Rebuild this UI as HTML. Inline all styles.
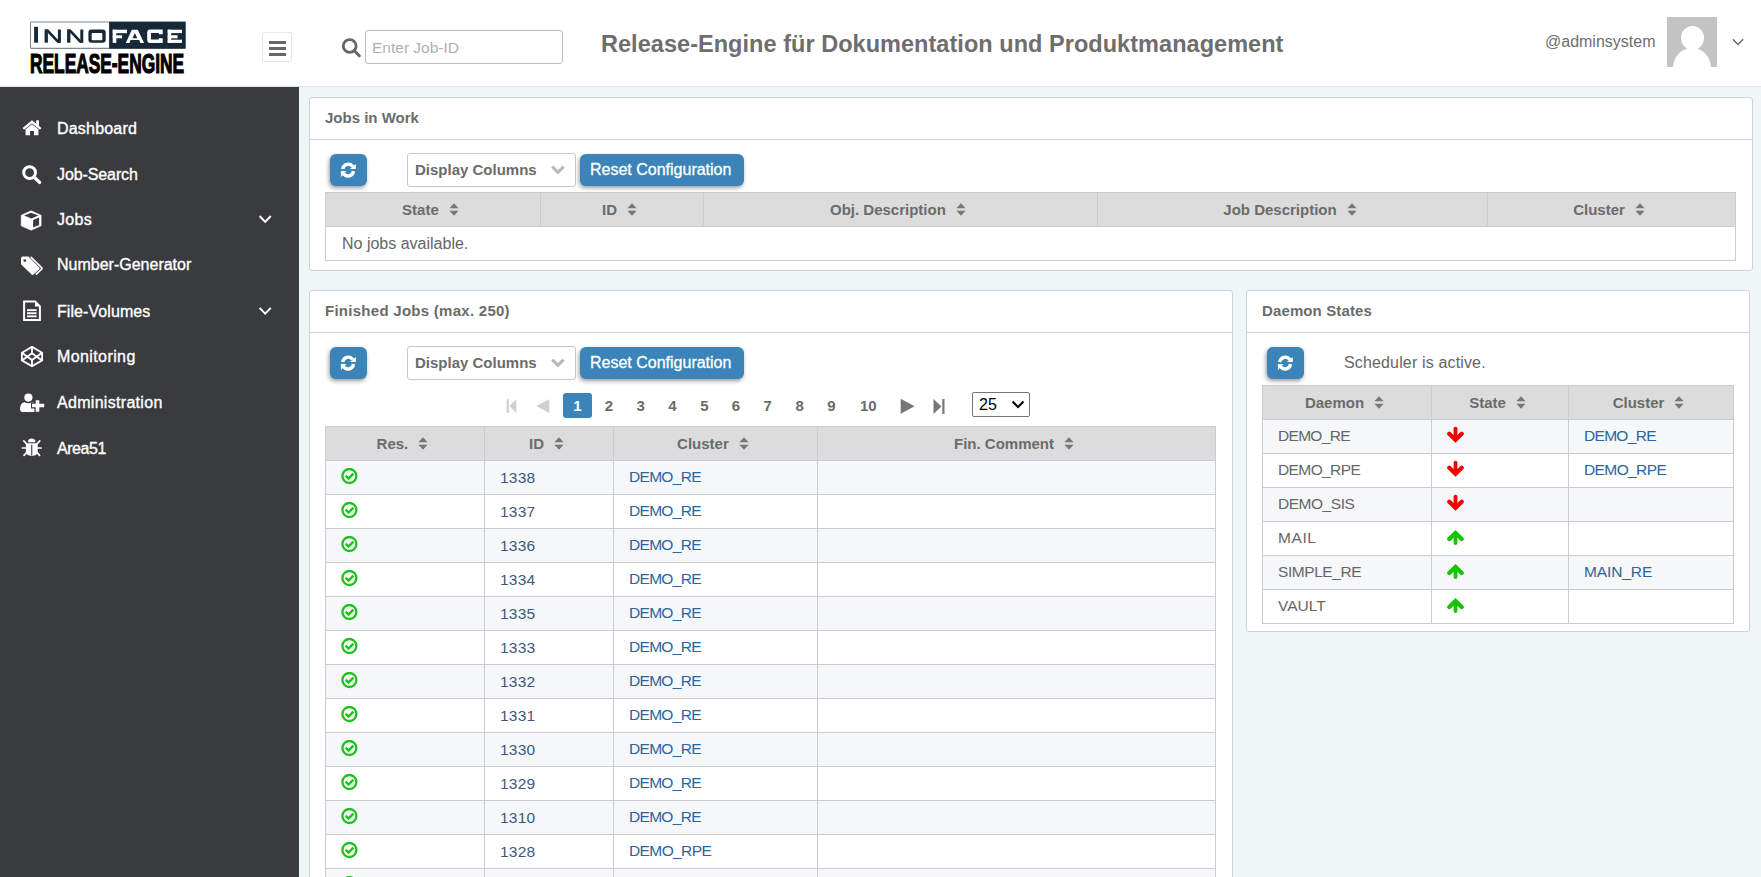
<!DOCTYPE html>
<html><head><meta charset="utf-8"><style>
*{box-sizing:border-box}
html,body{margin:0;padding:0}
body{width:1761px;height:877px;overflow:hidden;position:relative;background:#f0f5f8;font-family:"Liberation Sans",sans-serif;color:#666}
.abs{position:absolute}
#hdr{left:0;top:0;width:1761px;height:87px;background:#fff;border-bottom:1px solid #dfe4e8}
#side{left:0;top:87px;width:299px;height:790px;background:#3a3b3f}
.t{position:absolute;white-space:nowrap}
</style></head><body>
<div id="hdr" class="abs">
<svg class="abs" style="left:0;top:0" width="200" height="80" viewBox="0 0 200 80">
  <rect x="30.5" y="22" width="155" height="26.4" fill="#fff" stroke="#7f8a93" stroke-width="1.1" rx="0.8"/>
  <rect x="109.1" y="21.8" width="76.3" height="26.8" fill="#172838"/>
  <g fill="#172838">
   <rect x="34.1" y="26.8" width="3.9" height="15.9"/>
   <rect x="44.6" y="29.5" width="3.3" height="13.2"/><rect x="57.9" y="29.5" width="3" height="13.2"/>
   <polygon points="44.6,29.5 48.3,29.5 60.9,42.7 57.2,42.7"/>
   <rect x="67.1" y="29.5" width="3.3" height="13.2"/><rect x="80.3" y="29.5" width="3" height="13.2"/>
   <polygon points="67.1,29.5 70.8,29.5 83.3,42.7 79.6,42.7"/>
   <path fill-rule="evenodd" d="M91.4,29.5 H102.7 Q105.7,29.5 105.7,32.5 V39.7 Q105.7,42.7 102.7,42.7 H91.4 Q88.4,42.7 88.4,39.7 V32.5 Q88.4,29.5 91.4,29.5 Z M92.3,33.1 H101.7 Q102.3,33.1 102.3,33.7 V39.6 Q102.3,40.2 101.7,40.2 H92.3 Q91.7,40.2 91.7,39.6 V33.7 Q91.7,33.1 92.3,33.1 Z"/>
  </g>
  <g fill="#fff">
   <rect x="112.7" y="29.7" width="3.6" height="13.2"/><rect x="112.7" y="29.7" width="14.3" height="3.5"/><rect x="112.7" y="35.3" width="9.4" height="3"/>
   <path fill-rule="evenodd" d="M131.8,29.7 H137.8 L144.1,42.9 H140.4 L139.2,40.1 H130.6 L129.4,42.9 H125.8 Z M134.9,33 L137.3,38.2 H132.5 Z"/>
   <path fill-rule="evenodd" d="M150.2,29.5 H162.7 V34.3 H158.8 V33.1 H151 V39.4 H158.8 V38.3 H162.7 V42.9 H150.2 Q147.2,42.9 147.2,39.9 V32.5 Q147.2,29.5 150.2,29.5 Z"/>
   <rect x="167.7" y="29.7" width="3.5" height="13.2"/><rect x="167.7" y="29.7" width="14.3" height="3.4"/><rect x="167.7" y="35.2" width="9.8" height="3.1"/><rect x="167.7" y="39.7" width="14.3" height="3.2"/>
  </g>
 </svg>
 <div class="abs" style="left:30.2px;top:49px;height:28px;color:#000;font-weight:bold;font-size:28.5px;line-height:28px;white-space:nowrap;transform:scaleX(0.608);transform-origin:0 0;letter-spacing:0px;-webkit-text-stroke:1.2px #000">RELEASE-ENGINE</div>
 <div class="abs" style="left:262px;top:32px;width:30px;height:30px;border:1px solid #e6e6e6;border-radius:2px;background:#fff">
   <div class="abs" style="left:6px;top:8px;width:17px;height:3px;background:#666"></div>
   <div class="abs" style="left:6px;top:14px;width:17px;height:3px;background:#666"></div>
   <div class="abs" style="left:6px;top:20px;width:17px;height:3px;background:#666"></div>
 </div>
 <svg class="abs" style="left:341px;top:38px" width="20" height="20" viewBox="0 0 20 20"><circle cx="8.7" cy="8" r="6.4" fill="none" stroke="#666" stroke-width="2.8"/><line x1="13.3" y1="12.8" x2="18.3" y2="17.8" stroke="#666" stroke-width="3" stroke-linecap="round"/></svg>
 <div class="abs" style="left:365px;top:30px;width:198px;height:34px;border:1px solid #b9bec2;border-radius:3px;background:#fff"></div>
 <div class="abs" style="left:372px;top:38.5px;font-size:15.5px;line-height:18px;color:#b0b0b0;white-space:nowrap">Enter Job-ID</div>
 <div class="abs" style="left:601px;top:30px;font-size:23.5px;line-height:28px;font-weight:bold;color:#6e6e6e;white-space:nowrap;letter-spacing:0.04px">Release-Engine für Dokumentation und Produktmanagement</div>
 <div class="abs" style="left:1545px;top:33px;font-size:16px;line-height:18px;color:#6e6e6e;white-space:nowrap">@adminsystem</div>
 <div class="abs" style="left:1667px;top:17px;width:50px;height:50px;background:#c3c3c3;overflow:hidden">
   <div class="abs" style="left:14px;top:9px;width:23px;height:24px;border-radius:50%;background:#fff"></div>
   <div class="abs" style="left:6px;top:31px;width:38px;height:40px;border-radius:50%;background:#fff"></div>
 </div>
 <svg class="abs" style="left:1731px;top:37px" width="14" height="10" viewBox="0 0 14 10"><polyline points="1.8,2.3 7,7.5 12.2,2.3" fill="none" stroke="#666" stroke-width="1.4"/></svg>
</div>
<div id="side" class="abs"><svg class="abs" style="left:0;top:-87px" width="299" height="877" viewBox="0 0 299 877">
<g fill="#fff" stroke="none">
 <polyline points="23.3,128.8 32,121.8 40.7,128.8" fill="none" stroke="#fff" stroke-width="2.3"/>
 <rect x="36.2" y="120.3" width="2.8" height="5.5"/>
 <path d="M25.6,129.2 L32,124.2 L38.4,129.2 V135.2 H34 V131 H30 V135.2 H25.6 Z"/>
 <circle cx="29.6" cy="172.6" r="5.9" fill="none" stroke="#fff" stroke-width="3"/>
 <line x1="34.2" y1="177.2" x2="39.6" y2="182.4" stroke="#fff" stroke-width="3.4" stroke-linecap="round"/>
 <path d="M31.1,210.8 L41.1,215.3 L41.1,225.8 L31.1,230.2 L21.2,225.8 L21.2,215.3 Z" stroke="#fff" stroke-width="0.6" stroke-linejoin="round"/>
 <path d="M31.1,212.7 L38.3,215.6 L31.4,218.6 L24.1,215.6 Z" fill="#3a3b3f"/>
 <path d="M33.1,220 L39.1,217.4 L39.1,224.9 L33.1,227.6 Z" fill="#3a3b3f"/>
 <path d="M30.6,256.8 L41.6,267.6 Q42.4,268.4 41.6,269.2 L35.8,274.6" fill="none" stroke="#fff" stroke-width="1.7"/>
 <path d="M21,258.5 Q21,256.6 22.9,256.6 L28.4,256.6 L39.2,267.4 Q40.1,268.3 39.2,269.2 L33.4,274.6 Q32.5,275.4 31.6,274.6 L21,264.3 Z"/>
 <circle cx="24.8" cy="260.6" r="1.4" fill="#3a3b3f"/>
 <path d="M24.1,301.6 H35.2 L39.9,306.3 V319.9 H24.1 Z" fill="none" stroke="#fff" stroke-width="2"/>
 <path d="M35,301.6 L40,306.6 L35,306.6 Z"/>
 <rect x="27" y="309.2" width="9.6" height="1.9"/><rect x="27" y="312.3" width="9.6" height="1.9"/><rect x="27" y="315.4" width="9.6" height="1.9"/>
 <g fill="none" stroke="#fff" stroke-width="1.9" stroke-linejoin="round">
  <path d="M32,346.9 L42.1,352.8 L42.1,360.4 L32,366.3 L21.9,360.4 L21.9,352.8 Z"/>
  <path d="M32,346.9 V353.2 L21.9,360.4 M32,353.2 L42.1,360.4 M32,366.3 V360 L21.9,352.8 M32,360 L42.1,352.8"/>
 </g>
 <circle cx="28.4" cy="397.6" r="4.1"/>
 <path d="M20.1,409.5 Q20.1,402.6 24.6,402.2 Q28.4,404.3 32.2,402.2 Q36.2,402.6 36.8,409.5 Q36.8,412 34.5,412 H22.4 Q20.1,412 20.1,409.5 Z"/>
 <path d="M37.5,399 V412.5 M31,405.5 H45" stroke="#3a3b3f" stroke-width="6.2"/>
 <path d="M37.5,400.2 V411.8 M32,405.5 H44.2" stroke="#fff" stroke-width="3.6"/>
 <path d="M27.9,442.2 A3.8,3.8 0 0 1 35.5,442.2 Z"/>
 <path d="M25.9,443.2 H37.7 V451.5 Q37.7,455.8 31.8,455.9 Q25.9,455.8 25.9,451.5 Z"/>
 <rect x="31.2" y="444.6" width="1.1" height="11" fill="#3a3b3f"/>
 <path d="M23.8,440.9 L26.6,443.9 M39.8,440.9 L37,443.9 M22.4,448 H26.2 M37.4,448 H41.1 M24,455.4 L26.8,452.4 M39.6,455.4 L36.8,452.4" stroke="#fff" stroke-width="1.7" stroke-linecap="round"/>
 <polyline points="259.6,216 265.2,221.8 270.8,216" fill="none" stroke="#fff" stroke-width="1.9"/>
 <polyline points="259.6,307.8 265.2,313.6 270.8,307.8" fill="none" stroke="#fff" stroke-width="1.9"/>
</g></svg><div class="abs" style="left:57px;top:32.5px;font-size:16px;line-height:18px;color:#fff;white-space:nowrap;-webkit-text-stroke:0.35px #fff;letter-spacing:0.2px">Dashboard</div><div class="abs" style="left:57px;top:78.5px;font-size:16px;line-height:18px;color:#fff;white-space:nowrap;-webkit-text-stroke:0.35px #fff;letter-spacing:-0.1px">Job-Search</div><div class="abs" style="left:57px;top:123.8px;font-size:16px;line-height:18px;color:#fff;white-space:nowrap;-webkit-text-stroke:0.35px #fff;letter-spacing:0.3px">Jobs</div><div class="abs" style="left:57px;top:169.3px;font-size:16px;line-height:18px;color:#fff;white-space:nowrap;-webkit-text-stroke:0.35px #fff;letter-spacing:0px">Number-Generator</div><div class="abs" style="left:57px;top:215.5px;font-size:16px;line-height:18px;color:#fff;white-space:nowrap;-webkit-text-stroke:0.35px #fff;letter-spacing:0.07px">File-Volumes</div><div class="abs" style="left:57px;top:261.0px;font-size:16px;line-height:18px;color:#fff;white-space:nowrap;-webkit-text-stroke:0.35px #fff;letter-spacing:0.4px">Monitoring</div><div class="abs" style="left:57px;top:306.5px;font-size:16px;line-height:18px;color:#fff;white-space:nowrap;-webkit-text-stroke:0.35px #fff;letter-spacing:0.3px">Administration</div><div class="abs" style="left:57px;top:352.5px;font-size:16px;line-height:18px;color:#fff;white-space:nowrap;-webkit-text-stroke:0.35px #fff;letter-spacing:-0.45px">Area51</div></div>

<div id="main">
<div class="abs" style="left:309px;top:97px;width:1444px;height:174px;background:#fff;border:1px solid #cfd4d8;border-radius:3px"></div>
<div class="abs" style="left:309px;top:139px;width:1444px;height:1px;background:#cfd4d8"></div>
<div class="t" style="left:325px;top:109.2px;font-size:15px;line-height:18px;font-weight:bold;color:#6b6b6b;letter-spacing:0px">Jobs in Work</div>
<div class="abs" style="left:330px;top:154px;width:37px;height:32px;background:#3a84b9;border-radius:6px;box-shadow:-1px 2px 4px rgba(0,0,0,.4)"><svg class="abs" style="left:10px;top:8px;overflow:visible" width="17" height="17" viewBox="-1 -1 17 17"><path d="M1.7,6.1 A5.5,5.5 0 0 1 11.8,3.7" fill="none" stroke="#fff" stroke-width="3.3"/><path d="M14.8,0.9 V6.1 H8.9 Z" fill="#fff"/><path d="M12.5,8.0 A5.5,5.5 0 0 1 2.4,10.4" fill="none" stroke="#fff" stroke-width="3.3"/><path d="M-0.1,13.9 V8.0 H5.6 Z" fill="#fff"/></svg></div>
<div class="abs" style="left:407px;top:153px;width:169px;height:34px;border:1px solid #c4c9cd;border-radius:3px;background:#fff"></div>
<div class="t" style="left:415px;top:160.8px;font-size:15px;line-height:18px;font-weight:bold;color:#6b6b6b">Display Columns</div>
<svg class="abs" style="left:550px;top:164px" width="16" height="12" viewBox="0 0 16 12"><polyline points="2.2,2.6 7.9,8.3 13.6,2.6" fill="none" stroke="#b8b8b8" stroke-width="3"/></svg>
<div class="abs" style="left:580px;top:154px;width:164px;height:32px;background:#3a84b9;border-radius:6px;box-shadow:-1px 2px 4px rgba(0,0,0,.4)"></div>
<div class="t" style="left:590px;top:161.0px;font-size:16px;line-height:18px;color:#fff;-webkit-text-stroke:0.3px #fff">Reset Configuration</div>
<div class="abs" style="left:325px;top:192px;width:1410px;height:34px;background:#dcdcdc"></div>
<div class="abs" style="left:325px;top:192px;width:1411px;height:1px;background:#c9cdd1"></div>
<div class="abs" style="left:325px;top:226px;width:1411px;height:1px;background:#c9cdd1"></div>
<div class="abs" style="left:325px;top:260px;width:1411px;height:1px;background:#c9cdd1"></div>
<div class="abs" style="left:325px;top:192px;width:1px;height:68px;background:#c9cdd1"></div>
<div class="abs" style="left:1735px;top:192px;width:1px;height:68px;background:#c9cdd1"></div>
<div class="abs" style="left:540px;top:192px;width:1px;height:34px;background:#c9cdd1"></div>
<div class="abs" style="left:703px;top:192px;width:1px;height:34px;background:#c9cdd1"></div>
<div class="abs" style="left:1097px;top:192px;width:1px;height:34px;background:#c9cdd1"></div>
<div class="abs" style="left:1487px;top:192px;width:1px;height:34px;background:#c9cdd1"></div>
<div class="t" style="left:402.1px;top:201.0px;font-size:15px;line-height:18px;font-weight:bold;color:#6b6b6b">State</div>
<svg class="abs" style="left:449px;top:202.5px" width="10" height="13" viewBox="0 0 10 13"><path d="M5,0.3 L9.6,5.2 H0.4 Z M5,12.7 L9.6,7.8 H0.4 Z" fill="#777"/></svg>
<div class="t" style="left:602.0px;top:201.0px;font-size:15px;line-height:18px;font-weight:bold;color:#6b6b6b">ID</div>
<svg class="abs" style="left:627px;top:202.5px" width="10" height="13" viewBox="0 0 10 13"><path d="M5,0.3 L9.6,5.2 H0.4 Z M5,12.7 L9.6,7.8 H0.4 Z" fill="#777"/></svg>
<div class="t" style="left:830.0px;top:201.0px;font-size:15px;line-height:18px;font-weight:bold;color:#6b6b6b">Obj. Description</div>
<svg class="abs" style="left:956px;top:202.5px" width="10" height="13" viewBox="0 0 10 13"><path d="M5,0.3 L9.6,5.2 H0.4 Z M5,12.7 L9.6,7.8 H0.4 Z" fill="#777"/></svg>
<div class="t" style="left:1223.3px;top:201.0px;font-size:15px;line-height:18px;font-weight:bold;color:#6b6b6b">Job Description</div>
<svg class="abs" style="left:1347px;top:202.5px" width="10" height="13" viewBox="0 0 10 13"><path d="M5,0.3 L9.6,5.2 H0.4 Z M5,12.7 L9.6,7.8 H0.4 Z" fill="#777"/></svg>
<div class="t" style="left:1573.2px;top:201.0px;font-size:15px;line-height:18px;font-weight:bold;color:#6b6b6b">Cluster</div>
<svg class="abs" style="left:1635px;top:202.5px" width="10" height="13" viewBox="0 0 10 13"><path d="M5,0.3 L9.6,5.2 H0.4 Z M5,12.7 L9.6,7.8 H0.4 Z" fill="#777"/></svg>
<div class="t" style="left:342px;top:234.5px;font-size:16px;line-height:18px;color:#666">No jobs available.</div>
<div class="abs" style="left:309px;top:290px;width:924px;height:610px;background:#fff;border:1px solid #cfd4d8;border-radius:3px"></div>
<div class="abs" style="left:309px;top:332px;width:924px;height:1px;background:#cfd4d8"></div>
<div class="t" style="left:325px;top:302.2px;font-size:15px;line-height:18px;font-weight:bold;color:#6b6b6b;letter-spacing:0.27px">Finished Jobs (max. 250)</div>
<div class="abs" style="left:330px;top:347px;width:37px;height:32px;background:#3a84b9;border-radius:6px;box-shadow:-1px 2px 4px rgba(0,0,0,.4)"><svg class="abs" style="left:10px;top:8px;overflow:visible" width="17" height="17" viewBox="-1 -1 17 17"><path d="M1.7,6.1 A5.5,5.5 0 0 1 11.8,3.7" fill="none" stroke="#fff" stroke-width="3.3"/><path d="M14.8,0.9 V6.1 H8.9 Z" fill="#fff"/><path d="M12.5,8.0 A5.5,5.5 0 0 1 2.4,10.4" fill="none" stroke="#fff" stroke-width="3.3"/><path d="M-0.1,13.9 V8.0 H5.6 Z" fill="#fff"/></svg></div>
<div class="abs" style="left:407px;top:346px;width:169px;height:34px;border:1px solid #c4c9cd;border-radius:3px;background:#fff"></div>
<div class="t" style="left:415px;top:353.8px;font-size:15px;line-height:18px;font-weight:bold;color:#6b6b6b">Display Columns</div>
<svg class="abs" style="left:550px;top:357px" width="16" height="12" viewBox="0 0 16 12"><polyline points="2.2,2.6 7.9,8.3 13.6,2.6" fill="none" stroke="#b8b8b8" stroke-width="3"/></svg>
<div class="abs" style="left:580px;top:347px;width:164px;height:32px;background:#3a84b9;border-radius:6px;box-shadow:-1px 2px 4px rgba(0,0,0,.4)"></div>
<div class="t" style="left:590px;top:354.0px;font-size:16px;line-height:18px;color:#fff;-webkit-text-stroke:0.3px #fff">Reset Configuration</div>
<svg class="abs" style="left:500px;top:390px" width="460" height="30" viewBox="500 390 460 30"><rect x="506.6" y="399.2" width="2.2" height="13.8" fill="#cfcfcf"/><path d="M516.3,399.2 V413 L509.5,406.1 Z" fill="#cfcfcf"/><path d="M549.3,399.2 V413 L536.2,406.1 Z" fill="#cfcfcf"/><path d="M900.7,398.8 V413.8 L914.6,406.3 Z" fill="#777"/><path d="M933.5,399 V414 L941.5,406.5 Z" fill="#777"/><rect x="942.3" y="399" width="2.2" height="15" fill="#777"/></svg>
<div class="abs" style="left:563px;top:393px;width:29px;height:25px;background:#3a84b9;border-radius:3px"></div>
<div class="t" style="left:573.3px;top:396.8px;font-size:15px;line-height:18px;font-weight:bold;color:#fff">1</div>
<div class="t" style="left:604.8px;top:396.8px;font-size:15px;line-height:18px;font-weight:bold;color:#6b6b6b">2</div>
<div class="t" style="left:636.6px;top:396.8px;font-size:15px;line-height:18px;font-weight:bold;color:#6b6b6b">3</div>
<div class="t" style="left:668.3px;top:396.8px;font-size:15px;line-height:18px;font-weight:bold;color:#6b6b6b">4</div>
<div class="t" style="left:700.3px;top:396.8px;font-size:15px;line-height:18px;font-weight:bold;color:#6b6b6b">5</div>
<div class="t" style="left:731.8px;top:396.8px;font-size:15px;line-height:18px;font-weight:bold;color:#6b6b6b">6</div>
<div class="t" style="left:763.6px;top:396.8px;font-size:15px;line-height:18px;font-weight:bold;color:#6b6b6b">7</div>
<div class="t" style="left:795.4px;top:396.8px;font-size:15px;line-height:18px;font-weight:bold;color:#6b6b6b">8</div>
<div class="t" style="left:827.2px;top:396.8px;font-size:15px;line-height:18px;font-weight:bold;color:#6b6b6b">9</div>
<div class="t" style="left:860.0px;top:396.8px;font-size:15px;line-height:18px;font-weight:bold;color:#6b6b6b">10</div>
<div class="abs" style="left:972px;top:392px;width:58px;height:25px;border:1px solid #767676;border-radius:2px;background:#fff"></div>
<div class="t" style="left:979px;top:395.8px;font-size:16px;line-height:18px;color:#000">25</div>
<svg class="abs" style="left:1011px;top:400px" width="14" height="9" viewBox="0 0 14 9"><polyline points="1.5,1.5 7,7 12.5,1.5" fill="none" stroke="#000" stroke-width="2"/></svg>
<div class="abs" style="left:325px;top:426px;width:890px;height:34px;background:#dcdcdc"></div>
<div class="abs" style="left:325px;top:460px;width:890px;height:34px;background:#f6f7f9"></div>
<div class="abs" style="left:325px;top:494px;width:890px;height:34px;background:#fff"></div>
<div class="abs" style="left:325px;top:528px;width:890px;height:34px;background:#f6f7f9"></div>
<div class="abs" style="left:325px;top:562px;width:890px;height:34px;background:#fff"></div>
<div class="abs" style="left:325px;top:596px;width:890px;height:34px;background:#f6f7f9"></div>
<div class="abs" style="left:325px;top:630px;width:890px;height:34px;background:#fff"></div>
<div class="abs" style="left:325px;top:664px;width:890px;height:34px;background:#f6f7f9"></div>
<div class="abs" style="left:325px;top:698px;width:890px;height:34px;background:#fff"></div>
<div class="abs" style="left:325px;top:732px;width:890px;height:34px;background:#f6f7f9"></div>
<div class="abs" style="left:325px;top:766px;width:890px;height:34px;background:#fff"></div>
<div class="abs" style="left:325px;top:800px;width:890px;height:34px;background:#f6f7f9"></div>
<div class="abs" style="left:325px;top:834px;width:890px;height:34px;background:#fff"></div>
<div class="abs" style="left:325px;top:868px;width:890px;height:34px;background:#f6f7f9"></div>
<div class="abs" style="left:325px;top:426px;width:891px;height:1px;background:#c9cdd1"></div>
<div class="abs" style="left:325px;top:460px;width:891px;height:1px;background:#c9cdd1"></div>
<div class="abs" style="left:325px;top:494px;width:891px;height:1px;background:#c9cdd1"></div>
<div class="abs" style="left:325px;top:528px;width:891px;height:1px;background:#c9cdd1"></div>
<div class="abs" style="left:325px;top:562px;width:891px;height:1px;background:#c9cdd1"></div>
<div class="abs" style="left:325px;top:596px;width:891px;height:1px;background:#c9cdd1"></div>
<div class="abs" style="left:325px;top:630px;width:891px;height:1px;background:#c9cdd1"></div>
<div class="abs" style="left:325px;top:664px;width:891px;height:1px;background:#c9cdd1"></div>
<div class="abs" style="left:325px;top:698px;width:891px;height:1px;background:#c9cdd1"></div>
<div class="abs" style="left:325px;top:732px;width:891px;height:1px;background:#c9cdd1"></div>
<div class="abs" style="left:325px;top:766px;width:891px;height:1px;background:#c9cdd1"></div>
<div class="abs" style="left:325px;top:800px;width:891px;height:1px;background:#c9cdd1"></div>
<div class="abs" style="left:325px;top:834px;width:891px;height:1px;background:#c9cdd1"></div>
<div class="abs" style="left:325px;top:868px;width:891px;height:1px;background:#c9cdd1"></div>
<div class="abs" style="left:325px;top:902px;width:891px;height:1px;background:#c9cdd1"></div>
<div class="abs" style="left:325px;top:426px;width:1px;height:476px;background:#c9cdd1"></div>
<div class="abs" style="left:484px;top:426px;width:1px;height:476px;background:#c9cdd1"></div>
<div class="abs" style="left:613px;top:426px;width:1px;height:476px;background:#c9cdd1"></div>
<div class="abs" style="left:817px;top:426px;width:1px;height:476px;background:#c9cdd1"></div>
<div class="abs" style="left:1215px;top:426px;width:1px;height:476px;background:#c9cdd1"></div>
<div class="t" style="left:376.6px;top:435.0px;font-size:15px;line-height:18px;font-weight:bold;color:#6b6b6b">Res.</div>
<svg class="abs" style="left:418px;top:436.5px" width="10" height="13" viewBox="0 0 10 13"><path d="M5,0.3 L9.6,5.2 H0.4 Z M5,12.7 L9.6,7.8 H0.4 Z" fill="#777"/></svg>
<div class="t" style="left:529.0px;top:435.0px;font-size:15px;line-height:18px;font-weight:bold;color:#6b6b6b">ID</div>
<svg class="abs" style="left:554px;top:436.5px" width="10" height="13" viewBox="0 0 10 13"><path d="M5,0.3 L9.6,5.2 H0.4 Z M5,12.7 L9.6,7.8 H0.4 Z" fill="#777"/></svg>
<div class="t" style="left:677.1px;top:435.0px;font-size:15px;line-height:18px;font-weight:bold;color:#6b6b6b">Cluster</div>
<svg class="abs" style="left:739px;top:436.5px" width="10" height="13" viewBox="0 0 10 13"><path d="M5,0.3 L9.6,5.2 H0.4 Z M5,12.7 L9.6,7.8 H0.4 Z" fill="#777"/></svg>
<div class="t" style="left:954.0px;top:435.0px;font-size:15px;line-height:18px;font-weight:bold;color:#6b6b6b">Fin. Comment</div>
<svg class="abs" style="left:1064px;top:436.5px" width="10" height="13" viewBox="0 0 10 13"><path d="M5,0.3 L9.6,5.2 H0.4 Z M5,12.7 L9.6,7.8 H0.4 Z" fill="#777"/></svg>
<svg class="abs" style="left:341px;top:468px" width="17" height="17" viewBox="0 0 17 17"><circle cx="8.4" cy="8" r="7" fill="none" stroke="#1cc21c" stroke-width="2.3"/><polyline points="4.6,7.6 7.6,10.6 12.4,5.6" fill="none" stroke="#1cc21c" stroke-width="2.4"/></svg>
<div class="t" style="left:500px;top:468.8px;font-size:15.5px;line-height:18px;color:#3d5a7a;letter-spacing:0.25px">1338</div>
<div class="t" style="left:629px;top:468.3px;font-size:15.5px;line-height:18px;color:#2a659b;letter-spacing:-0.69px">DEMO_RE</div>
<svg class="abs" style="left:341px;top:502px" width="17" height="17" viewBox="0 0 17 17"><circle cx="8.4" cy="8" r="7" fill="none" stroke="#1cc21c" stroke-width="2.3"/><polyline points="4.6,7.6 7.6,10.6 12.4,5.6" fill="none" stroke="#1cc21c" stroke-width="2.4"/></svg>
<div class="t" style="left:500px;top:502.8px;font-size:15.5px;line-height:18px;color:#3d5a7a;letter-spacing:0.25px">1337</div>
<div class="t" style="left:629px;top:502.3px;font-size:15.5px;line-height:18px;color:#2a659b;letter-spacing:-0.69px">DEMO_RE</div>
<svg class="abs" style="left:341px;top:536px" width="17" height="17" viewBox="0 0 17 17"><circle cx="8.4" cy="8" r="7" fill="none" stroke="#1cc21c" stroke-width="2.3"/><polyline points="4.6,7.6 7.6,10.6 12.4,5.6" fill="none" stroke="#1cc21c" stroke-width="2.4"/></svg>
<div class="t" style="left:500px;top:536.8px;font-size:15.5px;line-height:18px;color:#3d5a7a;letter-spacing:0.25px">1336</div>
<div class="t" style="left:629px;top:536.3px;font-size:15.5px;line-height:18px;color:#2a659b;letter-spacing:-0.69px">DEMO_RE</div>
<svg class="abs" style="left:341px;top:570px" width="17" height="17" viewBox="0 0 17 17"><circle cx="8.4" cy="8" r="7" fill="none" stroke="#1cc21c" stroke-width="2.3"/><polyline points="4.6,7.6 7.6,10.6 12.4,5.6" fill="none" stroke="#1cc21c" stroke-width="2.4"/></svg>
<div class="t" style="left:500px;top:570.8px;font-size:15.5px;line-height:18px;color:#3d5a7a;letter-spacing:0.25px">1334</div>
<div class="t" style="left:629px;top:570.3px;font-size:15.5px;line-height:18px;color:#2a659b;letter-spacing:-0.69px">DEMO_RE</div>
<svg class="abs" style="left:341px;top:604px" width="17" height="17" viewBox="0 0 17 17"><circle cx="8.4" cy="8" r="7" fill="none" stroke="#1cc21c" stroke-width="2.3"/><polyline points="4.6,7.6 7.6,10.6 12.4,5.6" fill="none" stroke="#1cc21c" stroke-width="2.4"/></svg>
<div class="t" style="left:500px;top:604.8px;font-size:15.5px;line-height:18px;color:#3d5a7a;letter-spacing:0.25px">1335</div>
<div class="t" style="left:629px;top:604.3px;font-size:15.5px;line-height:18px;color:#2a659b;letter-spacing:-0.69px">DEMO_RE</div>
<svg class="abs" style="left:341px;top:638px" width="17" height="17" viewBox="0 0 17 17"><circle cx="8.4" cy="8" r="7" fill="none" stroke="#1cc21c" stroke-width="2.3"/><polyline points="4.6,7.6 7.6,10.6 12.4,5.6" fill="none" stroke="#1cc21c" stroke-width="2.4"/></svg>
<div class="t" style="left:500px;top:638.8px;font-size:15.5px;line-height:18px;color:#3d5a7a;letter-spacing:0.25px">1333</div>
<div class="t" style="left:629px;top:638.3px;font-size:15.5px;line-height:18px;color:#2a659b;letter-spacing:-0.69px">DEMO_RE</div>
<svg class="abs" style="left:341px;top:672px" width="17" height="17" viewBox="0 0 17 17"><circle cx="8.4" cy="8" r="7" fill="none" stroke="#1cc21c" stroke-width="2.3"/><polyline points="4.6,7.6 7.6,10.6 12.4,5.6" fill="none" stroke="#1cc21c" stroke-width="2.4"/></svg>
<div class="t" style="left:500px;top:672.8px;font-size:15.5px;line-height:18px;color:#3d5a7a;letter-spacing:0.25px">1332</div>
<div class="t" style="left:629px;top:672.3px;font-size:15.5px;line-height:18px;color:#2a659b;letter-spacing:-0.69px">DEMO_RE</div>
<svg class="abs" style="left:341px;top:706px" width="17" height="17" viewBox="0 0 17 17"><circle cx="8.4" cy="8" r="7" fill="none" stroke="#1cc21c" stroke-width="2.3"/><polyline points="4.6,7.6 7.6,10.6 12.4,5.6" fill="none" stroke="#1cc21c" stroke-width="2.4"/></svg>
<div class="t" style="left:500px;top:706.8px;font-size:15.5px;line-height:18px;color:#3d5a7a;letter-spacing:0.25px">1331</div>
<div class="t" style="left:629px;top:706.3px;font-size:15.5px;line-height:18px;color:#2a659b;letter-spacing:-0.69px">DEMO_RE</div>
<svg class="abs" style="left:341px;top:740px" width="17" height="17" viewBox="0 0 17 17"><circle cx="8.4" cy="8" r="7" fill="none" stroke="#1cc21c" stroke-width="2.3"/><polyline points="4.6,7.6 7.6,10.6 12.4,5.6" fill="none" stroke="#1cc21c" stroke-width="2.4"/></svg>
<div class="t" style="left:500px;top:740.8px;font-size:15.5px;line-height:18px;color:#3d5a7a;letter-spacing:0.25px">1330</div>
<div class="t" style="left:629px;top:740.3px;font-size:15.5px;line-height:18px;color:#2a659b;letter-spacing:-0.69px">DEMO_RE</div>
<svg class="abs" style="left:341px;top:774px" width="17" height="17" viewBox="0 0 17 17"><circle cx="8.4" cy="8" r="7" fill="none" stroke="#1cc21c" stroke-width="2.3"/><polyline points="4.6,7.6 7.6,10.6 12.4,5.6" fill="none" stroke="#1cc21c" stroke-width="2.4"/></svg>
<div class="t" style="left:500px;top:774.8px;font-size:15.5px;line-height:18px;color:#3d5a7a;letter-spacing:0.25px">1329</div>
<div class="t" style="left:629px;top:774.3px;font-size:15.5px;line-height:18px;color:#2a659b;letter-spacing:-0.69px">DEMO_RE</div>
<svg class="abs" style="left:341px;top:808px" width="17" height="17" viewBox="0 0 17 17"><circle cx="8.4" cy="8" r="7" fill="none" stroke="#1cc21c" stroke-width="2.3"/><polyline points="4.6,7.6 7.6,10.6 12.4,5.6" fill="none" stroke="#1cc21c" stroke-width="2.4"/></svg>
<div class="t" style="left:500px;top:808.8px;font-size:15.5px;line-height:18px;color:#3d5a7a;letter-spacing:0.25px">1310</div>
<div class="t" style="left:629px;top:808.3px;font-size:15.5px;line-height:18px;color:#2a659b;letter-spacing:-0.69px">DEMO_RE</div>
<svg class="abs" style="left:341px;top:842px" width="17" height="17" viewBox="0 0 17 17"><circle cx="8.4" cy="8" r="7" fill="none" stroke="#1cc21c" stroke-width="2.3"/><polyline points="4.6,7.6 7.6,10.6 12.4,5.6" fill="none" stroke="#1cc21c" stroke-width="2.4"/></svg>
<div class="t" style="left:500px;top:842.8px;font-size:15.5px;line-height:18px;color:#3d5a7a;letter-spacing:0.25px">1328</div>
<div class="t" style="left:629px;top:842.3px;font-size:15.5px;line-height:18px;color:#2a659b;letter-spacing:-0.6px">DEMO_RPE</div>
<svg class="abs" style="left:341px;top:876px" width="17" height="17" viewBox="0 0 17 17"><circle cx="8.4" cy="8" r="7" fill="none" stroke="#1cc21c" stroke-width="2.3"/><polyline points="4.6,7.6 7.6,10.6 12.4,5.6" fill="none" stroke="#1cc21c" stroke-width="2.4"/></svg>
<div class="t" style="left:500px;top:876.8px;font-size:15.5px;line-height:18px;color:#3d5a7a;letter-spacing:0.25px">1327</div>
<div class="t" style="left:629px;top:876.3px;font-size:15.5px;line-height:18px;color:#2a659b;letter-spacing:-0.6px">DEMO_RPE</div>
<div class="abs" style="left:1246px;top:290px;width:504px;height:342px;background:#fff;border:1px solid #cfd4d8;border-radius:3px"></div>
<div class="abs" style="left:1246px;top:332px;width:504px;height:1px;background:#cfd4d8"></div>
<div class="t" style="left:1262px;top:302.2px;font-size:15px;line-height:18px;font-weight:bold;color:#6b6b6b;letter-spacing:0.12px">Daemon States</div>
<div class="abs" style="left:1267px;top:347px;width:37px;height:32px;background:#3a84b9;border-radius:6px;box-shadow:-1px 2px 4px rgba(0,0,0,.4)"><svg class="abs" style="left:10px;top:8px;overflow:visible" width="17" height="17" viewBox="-1 -1 17 17"><path d="M1.7,6.1 A5.5,5.5 0 0 1 11.8,3.7" fill="none" stroke="#fff" stroke-width="3.3"/><path d="M14.8,0.9 V6.1 H8.9 Z" fill="#fff"/><path d="M12.5,8.0 A5.5,5.5 0 0 1 2.4,10.4" fill="none" stroke="#fff" stroke-width="3.3"/><path d="M-0.1,13.9 V8.0 H5.6 Z" fill="#fff"/></svg></div>
<div class="t" style="left:1344px;top:353.5px;font-size:16px;line-height:18px;color:#666;letter-spacing:0.15px">Scheduler is active.</div>
<div class="abs" style="left:1262px;top:385px;width:471px;height:34px;background:#dcdcdc"></div>
<div class="abs" style="left:1262px;top:419px;width:471px;height:34px;background:#f6f7f9"></div>
<div class="abs" style="left:1262px;top:453px;width:471px;height:34px;background:#fff"></div>
<div class="abs" style="left:1262px;top:487px;width:471px;height:34px;background:#f6f7f9"></div>
<div class="abs" style="left:1262px;top:521px;width:471px;height:34px;background:#fff"></div>
<div class="abs" style="left:1262px;top:555px;width:471px;height:34px;background:#f6f7f9"></div>
<div class="abs" style="left:1262px;top:589px;width:471px;height:34px;background:#fff"></div>
<div class="abs" style="left:1262px;top:385px;width:472px;height:1px;background:#c9cdd1"></div>
<div class="abs" style="left:1262px;top:419px;width:472px;height:1px;background:#c9cdd1"></div>
<div class="abs" style="left:1262px;top:453px;width:472px;height:1px;background:#c9cdd1"></div>
<div class="abs" style="left:1262px;top:487px;width:472px;height:1px;background:#c9cdd1"></div>
<div class="abs" style="left:1262px;top:521px;width:472px;height:1px;background:#c9cdd1"></div>
<div class="abs" style="left:1262px;top:555px;width:472px;height:1px;background:#c9cdd1"></div>
<div class="abs" style="left:1262px;top:589px;width:472px;height:1px;background:#c9cdd1"></div>
<div class="abs" style="left:1262px;top:623px;width:472px;height:1px;background:#c9cdd1"></div>
<div class="abs" style="left:1262px;top:385px;width:1px;height:238px;background:#c9cdd1"></div>
<div class="abs" style="left:1431px;top:385px;width:1px;height:238px;background:#c9cdd1"></div>
<div class="abs" style="left:1568px;top:385px;width:1px;height:238px;background:#c9cdd1"></div>
<div class="abs" style="left:1733px;top:385px;width:1px;height:238px;background:#c9cdd1"></div>
<div class="t" style="left:1304.9px;top:394.0px;font-size:15px;line-height:18px;font-weight:bold;color:#6b6b6b">Daemon</div>
<svg class="abs" style="left:1374px;top:395.5px" width="10" height="13" viewBox="0 0 10 13"><path d="M5,0.3 L9.6,5.2 H0.4 Z M5,12.7 L9.6,7.8 H0.4 Z" fill="#777"/></svg>
<div class="t" style="left:1469.2px;top:394.0px;font-size:15px;line-height:18px;font-weight:bold;color:#6b6b6b">State</div>
<svg class="abs" style="left:1516px;top:395.5px" width="10" height="13" viewBox="0 0 10 13"><path d="M5,0.3 L9.6,5.2 H0.4 Z M5,12.7 L9.6,7.8 H0.4 Z" fill="#777"/></svg>
<div class="t" style="left:1612.7px;top:394.0px;font-size:15px;line-height:18px;font-weight:bold;color:#6b6b6b">Cluster</div>
<svg class="abs" style="left:1674px;top:395.5px" width="10" height="13" viewBox="0 0 10 13"><path d="M5,0.3 L9.6,5.2 H0.4 Z M5,12.7 L9.6,7.8 H0.4 Z" fill="#777"/></svg>
<div class="t" style="left:1278px;top:427.3px;font-size:15.5px;line-height:18px;color:#666;letter-spacing:-0.69px">DEMO_RE</div>
<svg class="abs" style="left:1446.5px;top:424px" width="17" height="22" viewBox="0 0 17 22"><g fill="none" stroke="#f40000" stroke-linecap="round"><path d="M8.5,4.6 V13" stroke-width="3.8"/><polyline points="2.3,9.7 8.5,15.9 14.7,9.7" stroke-width="4.2" stroke-linejoin="miter" stroke-linecap="round"/></g></svg>
<div class="t" style="left:1584px;top:427.3px;font-size:15.5px;line-height:18px;color:#2a659b;letter-spacing:-0.69px">DEMO_RE</div>
<div class="t" style="left:1278px;top:461.3px;font-size:15.5px;line-height:18px;color:#666;letter-spacing:-0.6px">DEMO_RPE</div>
<svg class="abs" style="left:1446.5px;top:458px" width="17" height="22" viewBox="0 0 17 22"><g fill="none" stroke="#f40000" stroke-linecap="round"><path d="M8.5,4.6 V13" stroke-width="3.8"/><polyline points="2.3,9.7 8.5,15.9 14.7,9.7" stroke-width="4.2" stroke-linejoin="miter" stroke-linecap="round"/></g></svg>
<div class="t" style="left:1584px;top:461.3px;font-size:15.5px;line-height:18px;color:#2a659b;letter-spacing:-0.6px">DEMO_RPE</div>
<div class="t" style="left:1278px;top:495.3px;font-size:15.5px;line-height:18px;color:#666;letter-spacing:-0.47px">DEMO_SIS</div>
<svg class="abs" style="left:1446.5px;top:492px" width="17" height="22" viewBox="0 0 17 22"><g fill="none" stroke="#f40000" stroke-linecap="round"><path d="M8.5,4.6 V13" stroke-width="3.8"/><polyline points="2.3,9.7 8.5,15.9 14.7,9.7" stroke-width="4.2" stroke-linejoin="miter" stroke-linecap="round"/></g></svg>
<div class="t" style="left:1278px;top:529.3px;font-size:15.5px;line-height:18px;color:#666;letter-spacing:0.6px">MAIL</div>
<svg class="abs" style="left:1446.5px;top:526px" width="17" height="22" viewBox="0 0 17 22"><g fill="none" stroke="#14c400" stroke-linecap="round"><path d="M8.5,17 V8" stroke-width="3.8"/><polyline points="2.3,13.1 8.5,6.9 14.7,13.1" stroke-width="4.2" stroke-linejoin="miter" stroke-linecap="round"/></g></svg>
<div class="t" style="left:1278px;top:563.3px;font-size:15.5px;line-height:18px;color:#666;letter-spacing:-0.44px">SIMPLE_RE</div>
<svg class="abs" style="left:1446.5px;top:560px" width="17" height="22" viewBox="0 0 17 22"><g fill="none" stroke="#14c400" stroke-linecap="round"><path d="M8.5,17 V8" stroke-width="3.8"/><polyline points="2.3,13.1 8.5,6.9 14.7,13.1" stroke-width="4.2" stroke-linejoin="miter" stroke-linecap="round"/></g></svg>
<div class="t" style="left:1584px;top:563.3px;font-size:15.5px;line-height:18px;color:#2a659b;letter-spacing:-0.1px">MAIN_RE</div>
<div class="t" style="left:1278px;top:597.3px;font-size:15.5px;line-height:18px;color:#666;letter-spacing:0px">VAULT</div>
<svg class="abs" style="left:1446.5px;top:594px" width="17" height="22" viewBox="0 0 17 22"><g fill="none" stroke="#14c400" stroke-linecap="round"><path d="M8.5,17 V8" stroke-width="3.8"/><polyline points="2.3,13.1 8.5,6.9 14.7,13.1" stroke-width="4.2" stroke-linejoin="miter" stroke-linecap="round"/></g></svg>
</div>
</body></html>
